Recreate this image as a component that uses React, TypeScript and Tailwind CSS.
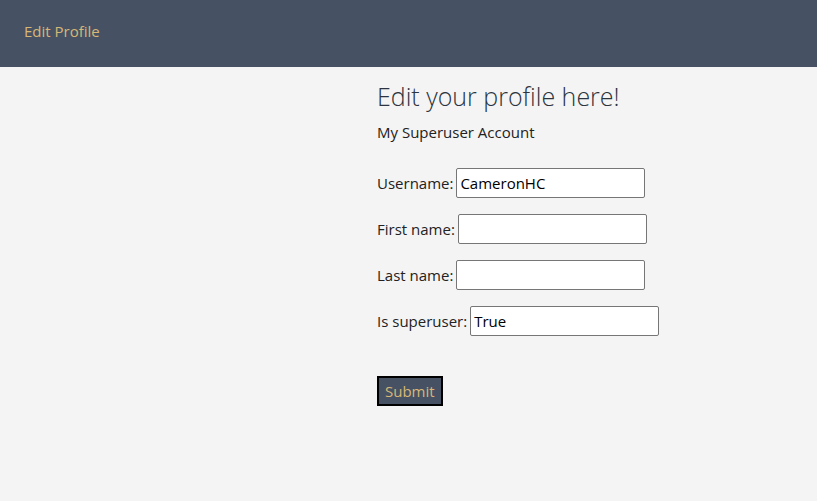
export default function App() {
  const font = { fontFamily: '"Segoe UI", "Open Sans", "Noto Sans", sans-serif' };
  const rows = [
    { label: "Username:", value: "CameronHC" },
    { label: "First name:", value: "" },
    { label: "Last name:", value: "" },
    { label: "Is superuser:", value: "True" },
  ];
  return (
    <div className="min-h-[501px] bg-[#f4f4f4] text-[#222]" style={font}>
      <header className="h-[67px] bg-[#465263] flex items-center px-6 pb-[4px]">
        <span className="text-[#d8b776] text-[15px]">Edit Profile</span>
      </header>
      <main className="pl-[377px] pt-[13px]">
        <h1 className="text-[25px] font-light leading-[32px] text-[#2b3440]">Edit your profile here!</h1>
        <p className="mt-[10px] text-[15px] leading-[20px]">My Superuser Account</p>
        <form className="mt-[26px] flex flex-col gap-[16px]">
          {rows.map((r) => (
            <div key={r.label} className="flex items-center h-[30px] text-[15px]">
              <label className="mr-[3px]">{r.label}</label>
              <input
                defaultValue={r.value}
                className="w-[189px] h-[30px] border border-[#767676] rounded-[2px] bg-white px-[3px] text-[15px] text-black"
              />
            </div>
          ))}
          <div className="mt-[24px]">
            <button
              type="button"
              className="h-[30px] px-[6px] border-2 border-black bg-[#465263] text-[#d8b776] text-[15px]"
            >
              Submit
            </button>
          </div>
        </form>
      </main>
    </div>
  );
}
